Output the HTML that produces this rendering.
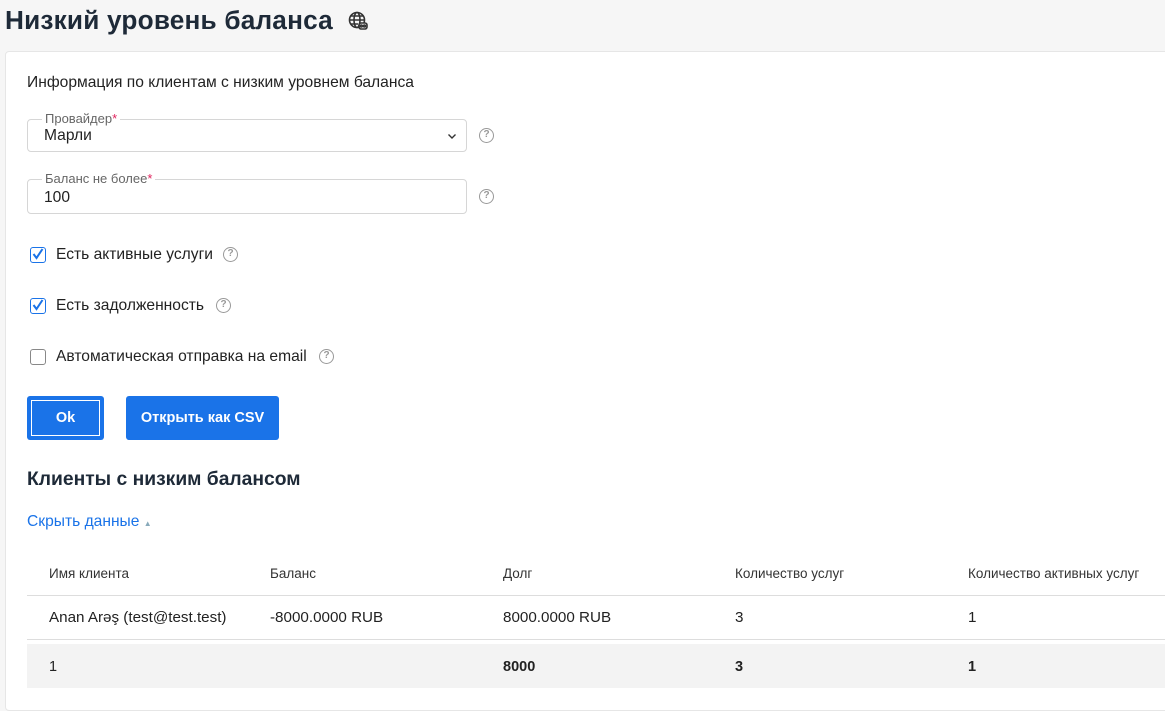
<!DOCTYPE html>
<html><head><meta charset="utf-8"><style>
*{box-sizing:border-box;margin:0;padding:0}
body{width:1165px;height:700px;overflow:hidden;background:#f6f6f6;font-family:"Liberation Sans","DejaVu Sans",sans-serif;color:#1f2a37;position:relative}
h1{position:absolute;left:5px;top:5px;font-size:26.2px;font-weight:bold;color:#1e2a38;letter-spacing:0.2px}
.card{position:absolute;left:5px;top:51px;width:1170px;height:660px;background:#fff;border:1px solid #e6e6e6;border-radius:4px}
.a{position:absolute}
.field{position:absolute;left:27px;width:440px;border:1px solid #d6d6d6;border-radius:4px;background:#fff}
.lbl{position:absolute;left:14px;top:-9px;background:#fff;padding:0 3px;font-size:13px;color:#666}
.lbl b{color:#e0245e;font-weight:normal}
.q{position:absolute;width:15px;height:15px;border:1.5px solid #999;border-radius:50%;font-size:10px;color:#999;text-align:center;line-height:12px;font-weight:bold}
.cb{position:absolute;left:30px;width:16px;height:16px;border-radius:3px}
.cb.on{border:1.5px solid #1a73e8}
.cb.off{border:1.5px solid #888}
.t{font-size:15.6px;color:#222}
.btn{position:absolute;top:396px;height:44px;background:#1a73e8;border-radius:3px;color:#fff;font-size:14.5px;font-weight:bold;text-align:center;line-height:44px}
.th{position:absolute;top:566px;font-size:13.5px;color:#333}
.td{position:absolute;top:609px;font-size:15.2px;color:#222}
.tf{position:absolute;top:659px;font-size:14.5px;font-weight:bold;color:#222}
</style></head><body>
<h1>Низкий уровень баланса <svg style="vertical-align:-2px;margin-left:8px" width="20" height="20" viewBox="0 0 20 20" fill="none" stroke="#333" stroke-width="1.6"><circle cx="9" cy="9" r="7.5"/><ellipse cx="9" cy="9" rx="3" ry="7.5"/><path d="M1.5 9h15M3 5h12M3 13h7"/><rect x="11" y="12" width="8" height="6" rx="2" fill="#fff"/><circle cx="13.3" cy="15" r="1"/><circle cx="16.5" cy="15" r="1"/></svg></h1>
<div class="card"></div>
<div class="a t" style="left:27px;top:74px">Информация по клиентам с низким уровнем баланса</div>
<div class="field" style="top:119px;height:33px"><span class="lbl">Провайдер<b>*</b></span><span class="a" style="left:16px;top:7px;font-size:15.6px;color:#222">Марли</span><svg class="a" style="left:419px;top:12px" width="10" height="8" viewBox="0 0 10 8"><path d="M1.5 2.5L5 6 8.5 2.5" stroke="#333" stroke-width="1.4" fill="none"/></svg></div>
<div class="q" style="left:479px;top:128px">?</div>
<div class="field" style="top:179px;height:35px"><span class="lbl">Баланс не более<b>*</b></span><span class="a" style="left:16px;top:9px;font-size:15.6px;color:#222">100</span></div>
<div class="q" style="left:479px;top:189px">?</div>
<div class="cb on" style="top:247px"><svg width="14" height="14" viewBox="0 0 14 14" style="position:absolute;left:0;top:-1px"><path d="M2.5 7l3 4 6-9" stroke="#1a73e8" stroke-width="2" fill="none"/></svg></div>
<div class="a t" style="left:56px;top:246px">Есть активные услуги</div>
<div class="q" style="left:223px;top:247px">?</div>
<div class="cb on" style="top:298px"><svg width="14" height="14" viewBox="0 0 14 14" style="position:absolute;left:0;top:-1px"><path d="M2.5 7l3 4 6-9" stroke="#1a73e8" stroke-width="2" fill="none"/></svg></div>
<div class="a t" style="left:56px;top:297px">Есть задолженность</div>
<div class="q" style="left:216px;top:298px">?</div>
<div class="cb off" style="top:349px"></div>
<div class="a t" style="left:56px;top:348px">Автоматическая отправка на email</div>
<div class="q" style="left:319px;top:349px">?</div>
<div class="btn" style="left:27px;width:77px"><div style="position:absolute;left:4px;top:4px;right:4px;bottom:4px;border:1px solid #fff"></div>Ok</div>
<div class="btn" style="left:126px;width:153px">Открыть как CSV</div>
<div class="a" style="left:27px;top:469px;font-size:19.3px;font-weight:bold;color:#1e2a38">Клиенты с низким балансом</div>
<div class="a" style="left:27px;top:513px;font-size:15.6px;color:#1a73e8">Скрыть данные <span style="font-size:8px;color:#8ab">▲</span></div>
<div class="th" style="left:49px">Имя клиента</div>
<div class="th" style="left:270px">Баланс</div>
<div class="th" style="left:503px">Долг</div>
<div class="th" style="left:735px">Количество услуг</div>
<div class="th" style="left:968px">Количество активных услуг</div>
<div class="a" style="left:27px;top:595px;width:1140px;height:1px;background:#ddd"></div>
<div class="td" style="left:49px">Anan Arəş (test@test.test)</div>
<div class="td" style="left:270px">-8000.0000 RUB</div>
<div class="td" style="left:503px">8000.0000 RUB</div>
<div class="td" style="left:735px">3</div>
<div class="td" style="left:968px">1</div>
<div class="a" style="left:27px;top:639px;width:1140px;height:1px;background:#ddd"></div>
<div class="a" style="left:27px;top:644px;width:1140px;height:44px;background:#f3f3f3"></div>
<div class="tf" style="left:49px;font-weight:normal">1</div>
<div class="tf" style="left:503px">8000</div>
<div class="tf" style="left:735px">3</div>
<div class="tf" style="left:968px">1</div>
</body></html>
